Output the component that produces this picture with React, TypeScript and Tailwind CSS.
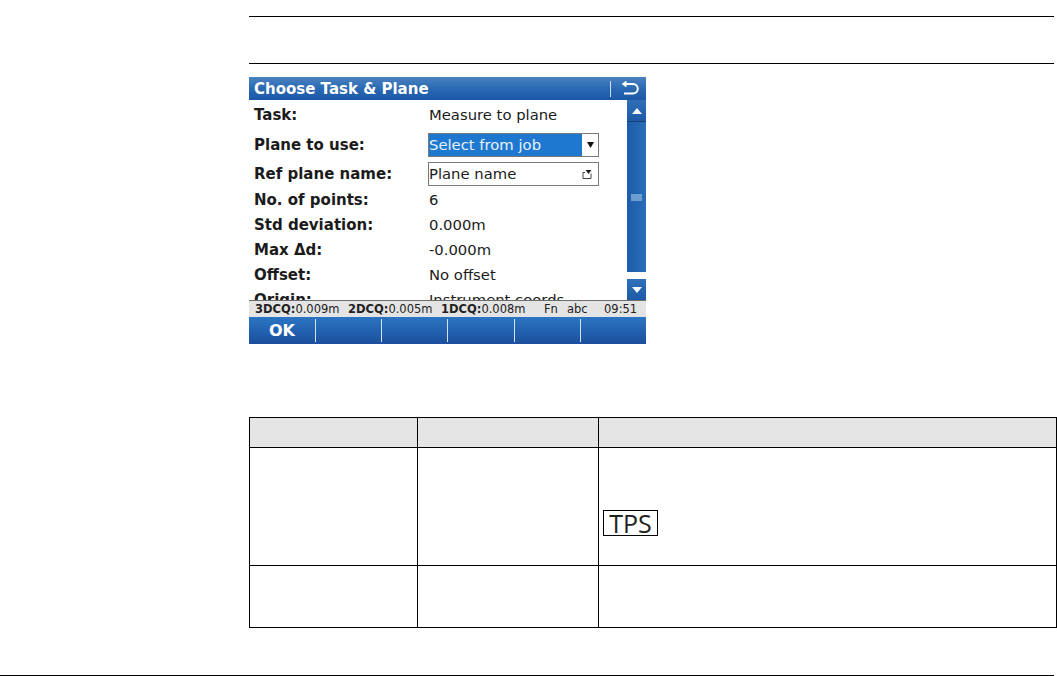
const rows = [
  { label: "Task:", value: "Measure to plane", h: "h-[30px]" },
  { label: "Plane to use:", select: "job", h: "h-[30px]" },
  { label: "Ref plane name:", select: "name", h: "h-[28px]" },
  { label: "No. of points:", value: "6", h: "h-[25px]" },
  { label: "Std deviation:", value: "0.000m", h: "h-[25px]" },
  { label: "Max Δd:", value: "-0.000m", h: "h-[25px]" },
  { label: "Offset:", value: "No offset", h: "h-[25px]" },
  { label: "Origin:", value: "Instrument coords", h: "h-[25px]" },
];

const quality = [
  { label: "3DCQ:", value: "0.009m" },
  { label: "2DCQ:", value: "0.005m" },
  { label: "1DCQ:", value: "0.008m" },
];

function Field({ kind }: { kind?: string }) {
  if (kind === "job") {
    return (
      <div className="flex h-[24px] w-[171px] -ml-[1px] border border-[#77797c] bg-white">
        <div className="flex w-[153px] items-center bg-[#1f78cf] text-[#e8f2fb]">Select from job</div>
        <div className="flex flex-1 items-center justify-center">
          <svg width="7" height="6" viewBox="0 0 7 6">
            <path d="M0 0h7L3.5 6z" fill="#111" />
          </svg>
        </div>
      </div>
    );
  }
  return (
    <div className="flex h-[24px] w-[171px] -ml-[1px] items-center justify-between border border-[#77797c] bg-white pr-[6px]">
      <span>Plane name</span>
      <svg width="10" height="10" viewBox="0 0 10 10" fill="none" stroke="#444">
        <path d="M1 3.5v6h8v-5M1 3.5h2" />
        <path d="M3.5 1h6L6.5 5z" fill="#222" stroke="none" />
      </svg>
    </div>
  );
}

function DeviceScreen() {
  return (
    <div className="flex h-[267px] w-[397px] flex-col overflow-hidden font-['DejaVu_Sans',sans-serif] text-[14.8px] text-[#1b1b1b]">
      {/* Title bar */}
      <div className="flex h-[23px] shrink-0 items-center bg-gradient-to-b from-[#4a82c0] via-[#2a69b3] to-[#1b57a6] text-white">
        <span className="pl-[5px] pt-[2px] text-[15px] font-bold">Choose Task &amp; Plane</span>
        <div className="ml-auto h-[16px] w-px bg-[#cfe0f2]" />
        <svg className="ml-[10px] mr-[7px]" width="18" height="15" viewBox="0 0 18 15" fill="none" stroke="#fff" strokeWidth="2">
          <path d="M2 3h10a3.8 3.8 0 0 1 0 9.5H3" />
          <path d="M5.5 0.5 2 3l3.5 2.5" strokeWidth="1.6" />
        </svg>
      </div>

      <div className="flex h-[200px] shrink-0">
        {/* Form rows */}
        <div className="flex-1 overflow-hidden bg-white">
          {rows.map((row) => (
            <div key={row.label} className={`flex items-center pl-[5px] ${row.h}`}>
              <span className="w-[175px] shrink-0 text-[15px] font-bold">{row.label}</span>
              {row.select ? <Field kind={row.select} /> : <span>{row.value}</span>}
            </div>
          ))}
        </div>

        {/* Scrollbar */}
        <div className="flex w-[19px] shrink-0 flex-col">
          <div className="flex h-[22px] items-center justify-center border-b border-[#17406f] bg-gradient-to-b from-[#2f70b8] to-[#1d5aa8]">
            <svg width="10" height="6" viewBox="0 0 10 6">
              <path d="M5 0l5 6H0z" fill="#f4f8fc" />
            </svg>
          </div>
          <div className="flex h-[150px] items-center justify-center bg-gradient-to-r from-[#1c5cab] to-[#2a6dba]">
            <div className="h-[7px] w-[11px] bg-[#6d9ccf]" />
          </div>
          <div className="h-[7px] bg-white" />
          <div className="flex flex-1 items-center justify-center bg-gradient-to-b from-[#2f70b8] to-[#1d5aa8]">
            <svg width="10" height="6" viewBox="0 0 10 6">
              <path d="M0 0h10L5 6z" fill="#f4f8fc" />
            </svg>
          </div>
        </div>
      </div>

      {/* Status bar */}
      <div className="flex h-[17px] shrink-0 items-center border-t border-[#6d6d6d] bg-[#e4e4e4] pl-[6px] pt-[2px] text-[11.5px] leading-none text-[#222]">
        {quality.map((q) => (
          <span key={q.label} className="w-[93px] shrink-0 whitespace-nowrap">
            <b>{q.label}</b>
            {q.value}
          </span>
        ))}
        <span className="ml-[10px] w-[23px]">Fn</span>
        <span className="w-[37px]">abc</span>
        <span>09:51</span>
      </div>

      {/* Softkeys */}
      <div className="flex h-[27px] shrink-0 items-center bg-gradient-to-b from-[#2b75c4] to-[#1b4f9c] text-white">
        <div className="w-[66px] text-center text-[16px] font-bold">OK</div>
        {[0, 1, 2, 3, 4].map((i) => (
          <div key={i} className="h-[23px] w-[66.4px] border-l border-[#d4e3f3]" />
        ))}
      </div>
    </div>
  );
}

export default function App() {
  return (
    <div className="h-[676px] w-[1057px] overflow-hidden bg-white">
      <div className="flex h-[675px] flex-col">
        <div className="ml-[249px] mt-[16px] h-[48px] w-[805px] shrink-0 border-y border-black" />

        <div className="ml-[249px] mt-[13px]">
          <DeviceScreen />
        </div>

        <div className="ml-[249px] mt-[73px] w-[808px]">
          <table className="w-full table-fixed border-collapse border border-black">
            <colgroup>
              <col className="w-[168px]" />
              <col className="w-[181px]" />
              <col />
            </colgroup>
            <tbody>
              <tr className="h-[30px] bg-[#e5e5e5]">
                <td className="border border-black" />
                <td className="border border-black" />
                <td className="border border-black" />
              </tr>
              <tr className="h-[118px]">
                <td className="border border-black" />
                <td className="border border-black" />
                <td className="border border-black pl-[4px] pt-[62px] align-top">
                  <span className="flex h-[26px] w-[55px] items-center justify-center border border-black font-['Open_Sans',sans-serif] text-[25px] leading-none text-[#222]">
                    TPS
                  </span>
                </td>
              </tr>
              <tr className="h-[62px]">
                <td className="border border-black" />
                <td className="border border-black" />
                <td className="border border-black" />
              </tr>
            </tbody>
          </table>
        </div>
      </div>
      <div className="h-px w-[1054px] bg-black" />
    </div>
  );
}
